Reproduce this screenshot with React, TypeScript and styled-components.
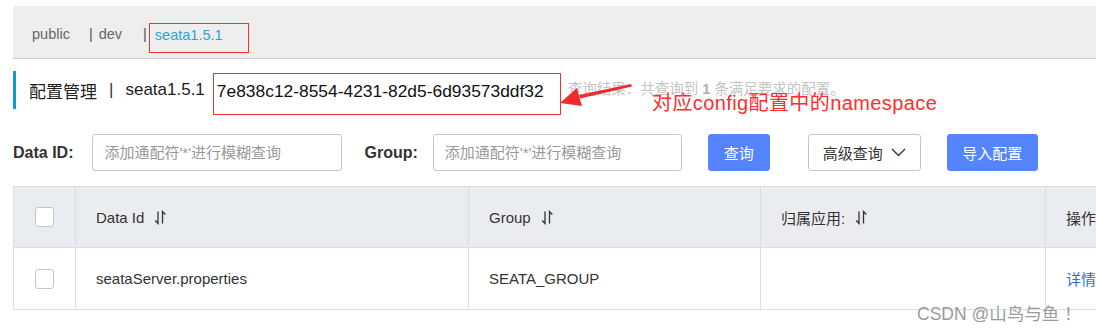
import React from "react";
import styled, { createGlobalStyle } from "styled-components";

const GlobalStyle = createGlobalStyle`
  html {
    overflow: hidden;
  }
  html, body {
    margin: 0;
    padding: 0;
    background: #ffffff;
  }
  body {
    font-family: "Liberation Sans", "Noto Sans CJK SC", sans-serif;
    color: #333333;
  }
  * { box-sizing: border-box; }
`;

const Page = styled.div`
  position: relative;
  width: 1200px;
  height: 330px;
  padding: 6px 0 0 13px;
`;

const NamespaceBar = styled.div`
  display: flex;
  align-items: flex-start;
  height: 53px;
  padding: 17px 0 0 19px;
  background: #eeeeee;
  border-bottom: 1px solid #cccccc;
  font-size: 14.5px;
  color: #666666;
`;

const NsItem = styled.span<{ $active?: boolean; $boxed?: boolean }>`
  display: inline-block;
  line-height: 22px;
  color: ${(p) => (p.$active ? "#2aa3da" : "#666666")};
  ${(p) =>
    p.$boxed
      ? `height: 30px; border: 1px solid #ee3333; padding: 0 25px 0 5px;`
      : ""}
`;

const NsSep = styled.span<{ $before: number; $after: number }>`
  display: inline-block;
  line-height: 22px;
  margin-left: ${(p) => p.$before}px;
  margin-right: ${(p) => p.$after}px;
  color: #555555;
`;

const TitleRow = styled.div`
  display: flex;
  align-items: flex-start;
  height: 44px;
  margin-top: 12px;
`;

const TitleBlock = styled.div`
  display: flex;
  align-items: center;
  height: 38px;
  padding-left: 13px;
  border-left: 3px solid #0e9bd3;
  font-size: 17px;
  color: #222222;
  white-space: nowrap;
`;

const TitleSep = styled.span`
  margin: 0 12px;
  color: #333333;
`;

const IdBox = styled.div`
  margin: 2px 0 0 8px;
  height: 42px;
  padding: 2px 16px 0 3px;
  border: 1px solid #ee3333;
  font-size: 17.4px;
  line-height: 30px;
  color: #111111;
  white-space: nowrap;
`;

const ResultText = styled.div`
  margin-left: 7px;
  line-height: 36px;
  font-size: 14.5px;
  color: #c4c4c4;
  white-space: nowrap;
`;

const ResultNum = styled.b`
  color: #b0b0b0;
`;

const FilterRow = styled.div`
  display: flex;
  align-items: center;
  height: 37px;
  margin-top: 19px;
`;

const Label = styled.label<{ $gap: number; $before?: number }>`
  font-size: 16px;
  font-weight: bold;
  color: #333333;
  margin-left: ${(p) => p.$before ?? 0}px;
  margin-right: ${(p) => p.$gap}px;
  white-space: nowrap;
`;

const Input = styled.input<{ $w: number }>`
  width: ${(p) => p.$w}px;
  height: 37px;
  padding: 0 11px;
  border: 1px solid #c4c6cf;
  border-radius: 3px;
  font-family: "Liberation Sans", "Noto Sans CJK SC", sans-serif;
  font-size: 15px;
  color: #333333;
  outline: none;
  &::placeholder {
    color: #999999;
  }
`;

const Button = styled.button<{ $primary?: boolean; $w: number; $ml: number }>`
  display: inline-flex;
  align-items: center;
  justify-content: center;
  gap: 8px;
  width: ${(p) => p.$w}px;
  height: 37px;
  margin-left: ${(p) => p.$ml}px;
  padding: 0;
  border-radius: 3px;
  border: 1px solid ${(p) => (p.$primary ? "#5584ff" : "#c4c6cf")};
  background: ${(p) => (p.$primary ? "#5584ff" : "#ffffff")};
  color: ${(p) => (p.$primary ? "#ffffff" : "#333333")};
  font-family: "Liberation Sans", "Noto Sans CJK SC", sans-serif;
  font-size: 15px;
  cursor: pointer;
`;

const Table = styled.div`
  display: grid;
  grid-template-columns: 62px 393px 292px 285px 140px;
  grid-template-rows: 61px 62px;
  margin-top: 15px;
  border-top: 1px solid #dcdee3;
  border-left: 1px solid #dcdee3;
`;

const Cell = styled.div<{ $head?: boolean; $center?: boolean }>`
  display: flex;
  align-items: center;
  justify-content: ${(p) => (p.$center ? "center" : "flex-start")};
  padding: ${(p) => (p.$center ? "0" : "0 20px")};
  border-right: 1px solid #dcdee3;
  border-bottom: 1px solid #dcdee3;
  background: ${(p) => (p.$head ? "#ebecf0" : "#ffffff")};
  font-size: 15px;
  color: #333333;
  white-space: nowrap;
  gap: 10px;
`;

const Check = styled.span`
  display: inline-block;
  width: 19px;
  height: 20px;
  border: 1px solid #c4c6cf;
  border-radius: 3px;
  background: #ffffff;
`;

const Link = styled.a`
  color: #2a6fd6;
  text-decoration: none;
`;

const Note = styled.div`
  position: absolute;
  left: 652px;
  top: 92px;
  font-size: 20px;
  line-height: 22px;
  letter-spacing: 0.4px;
  color: #ff2d2d;
  white-space: nowrap;
`;

const ArrowSvg = styled.svg`
  position: absolute;
  left: 555px;
  top: 78px;
`;

const Watermark = styled.div`
  position: absolute;
  left: 917px;
  top: 302px;
  font-size: 17.5px;
  line-height: 24px;
  color: #9a9a9a;
  text-shadow: 0 0 1px #ffffff;
  white-space: nowrap;
`;

const SortIcon = () => (
  <svg width="13" height="15" viewBox="0 0 13 15">
    <path d="M4 1.5 V13.5 L1.2 10.5" fill="none" stroke="#333" strokeWidth="1.3" />
    <path d="M8.5 13.5 V1.5 L11.3 4.5" fill="none" stroke="#333" strokeWidth="1.3" />
  </svg>
);

const Chevron = () => (
  <svg width="15" height="9" viewBox="0 0 15 9">
    <path d="M1 1 L7.5 7.5 L14 1" fill="none" stroke="#333" strokeWidth="1.4" />
  </svg>
);

export default function App() {
  return (
    <>
      <GlobalStyle />
      <Page>
        <NamespaceBar>
          <NsItem>public</NsItem>
          <NsSep $before={19} $after={6}>|</NsSep>
          <NsItem>dev</NsItem>
          <NsSep $before={21} $after={2}>|</NsSep>
          <NsItem $active $boxed>
            seata1.5.1
          </NsItem>
        </NamespaceBar>

        <TitleRow>
          <TitleBlock>
            配置管理
            <TitleSep>|</TitleSep>
            seata1.5.1
          </TitleBlock>
          <IdBox>7e838c12-8554-4231-82d5-6d93573ddf32</IdBox>
          <ResultText>
            查询结果：共查询到 <ResultNum>1</ResultNum> 条满足要求的配置。
          </ResultText>
        </TitleRow>

        <FilterRow>
          <Label $gap={19}>Data ID:</Label>
          <Input $w={250} placeholder="添加通配符'*'进行模糊查询" />
          <Label $gap={15} $before={22}>
            Group:
          </Label>
          <Input $w={249} placeholder="添加通配符'*'进行模糊查询" />
          <Button $primary $w={62} $ml={26}>
            查询
          </Button>
          <Button $w={113} $ml={38}>
            高级查询
            <Chevron />
          </Button>
          <Button $primary $w={91} $ml={26}>
            导入配置
          </Button>
        </FilterRow>

        <Table>
          <Cell $head $center>
            <Check />
          </Cell>
          <Cell $head>
            Data Id <SortIcon />
          </Cell>
          <Cell $head>
            Group <SortIcon />
          </Cell>
          <Cell $head>
            归属应用: <SortIcon />
          </Cell>
          <Cell $head>操作</Cell>

          <Cell $center>
            <Check />
          </Cell>
          <Cell>seataServer.properties</Cell>
          <Cell>SEATA_GROUP</Cell>
          <Cell />
          <Cell>
            <Link>详情</Link>
          </Cell>
        </Table>

        <ArrowSvg width="80" height="32" viewBox="0 0 80 32">
          <path d="M24 17 L76 6 L77 8.5 L25 20.5 Z" fill="#f02b2b" />
          <path d="M5 25 L22 10 L24 18 L27 28 Z" fill="#f02b2b" />
        </ArrowSvg>
        <Note>对应config配置中的namespace</Note>
        <Watermark>CSDN @山鸟与鱼 ！</Watermark>
      </Page>
    </>
  );
}
